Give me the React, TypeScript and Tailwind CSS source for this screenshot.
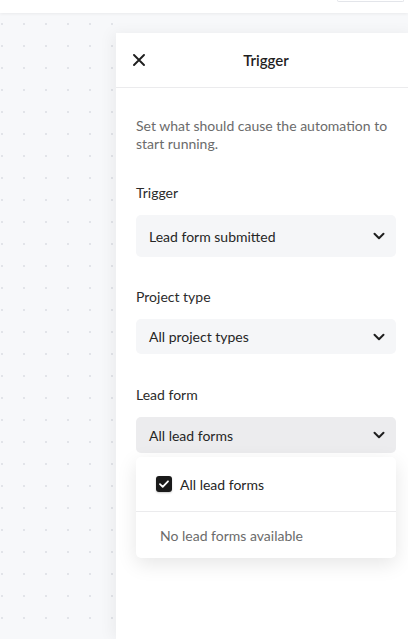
const FONT = { fontFamily: "Lato, 'Noto Sans', sans-serif" };

function Chevron() {
  return (
    <svg width="12" height="8" viewBox="0 0 12 8" fill="none" className="shrink-0">
      <path d="M1.5 1.75 6 6.25l4.5-4.5" stroke="#1f1f1f" strokeWidth="2" strokeLinecap="round" strokeLinejoin="round" />
    </svg>
  );
}

function Select({ value, height, open }: { value: string; height: string; open?: boolean }) {
  return (
    <div
      className={`flex items-center justify-between rounded-[5px] pl-[13px] pr-[11px] text-[14px] text-[#262626] ${height} ${
        open ? "bg-[#ececee]" : "bg-[#f5f6f8]"
      }`}
    >
      <span>{value}</span>
      <Chevron />
    </div>
  );
}

export default function App() {
  return (
    <div className="flex h-[639px] w-full flex-col overflow-hidden bg-[#f7f8fa]" style={FONT}>
      {/* top bar */}
      <div className="relative z-10 flex h-[13px] shrink-0 items-start justify-end bg-white shadow-[0_1px_3px_rgba(0,0,0,0.06)]">
        <div className="mr-[4px] h-[2px] w-[67px] rounded-b border-x border-b border-[#e3e5ea]" />
      </div>

      <div className="flex min-h-0 flex-1">
        {/* canvas */}
        <div
          className="w-[116px] shrink-0"
          style={{
            backgroundImage: "radial-gradient(circle, #e1e3e8 0.7px, transparent 1.1px)",
            backgroundSize: "22px 22px",
            backgroundPosition: "-9px 0px",
          }}
        />

        {/* side panel */}
        <div className="mt-[20px] flex w-[300px] shrink-0 flex-col bg-white shadow-[-4px_0_14px_rgba(0,0,0,0.05)]">
          <div className="grid h-[55px] shrink-0 grid-cols-[1fr_auto_1fr] items-center border-b border-[#ebebed] px-[17px]">
            <svg width="12" height="12" viewBox="0 0 12 12" fill="none">
              <path d="M1 1l10 10M11 1 1 11" stroke="#1f1f1f" strokeWidth="1.9" strokeLinecap="round" />
            </svg>
            <span className="text-[15px] font-semibold text-[#1f1f1f]">Trigger</span>
            <span />
          </div>

          <div className="flex flex-col px-[20px] pt-[29px]">
            <p className="text-[14px] leading-[18px] text-[#6b6b6b]">
              Set what should cause the automation to start running.
            </p>

            <label className="mt-[31px] mb-[13px] text-[14px] leading-[18px] text-[#2b2b2b]">Trigger</label>
            <Select value="Lead form submitted" height="h-[42px]" />

            <label className="mt-[31px] mb-[13px] text-[14px] leading-[18px] text-[#2b2b2b]">Project type</label>
            <Select value="All project types" height="h-[35px]" />

            <label className="mt-[32px] mb-[13px] text-[14px] leading-[18px] text-[#2b2b2b]">Lead form</label>
            <Select value="All lead forms" height="h-[36px]" open />

            <div className="mt-[4px] flex flex-col rounded-[5px] bg-white shadow-[0_6px_20px_rgba(0,0,0,0.1)]">
              <div className="flex h-[55px] items-center gap-[8px] border-b border-[#ebebed] pl-[20px]">
                <span className="flex h-[16px] w-[16px] items-center justify-center rounded-[3px] bg-[#1a1a1a] shadow-[0_1px_2px_rgba(0,0,0,0.2)]">
                  <svg width="10" height="8" viewBox="0 0 10 8" fill="none">
                    <path d="M1 4.2 3.7 6.8 9 1.3" stroke="white" strokeWidth="1.8" strokeLinecap="round" strokeLinejoin="round" />
                  </svg>
                </span>
                <span className="text-[14px] text-[#262626]">All lead forms</span>
              </div>
              <div className="flex h-[46px] items-center pl-[24px] text-[14px] text-[#6b6b6b]">
                No lead forms available
              </div>
            </div>
          </div>
        </div>
      </div>
    </div>
  );
}
